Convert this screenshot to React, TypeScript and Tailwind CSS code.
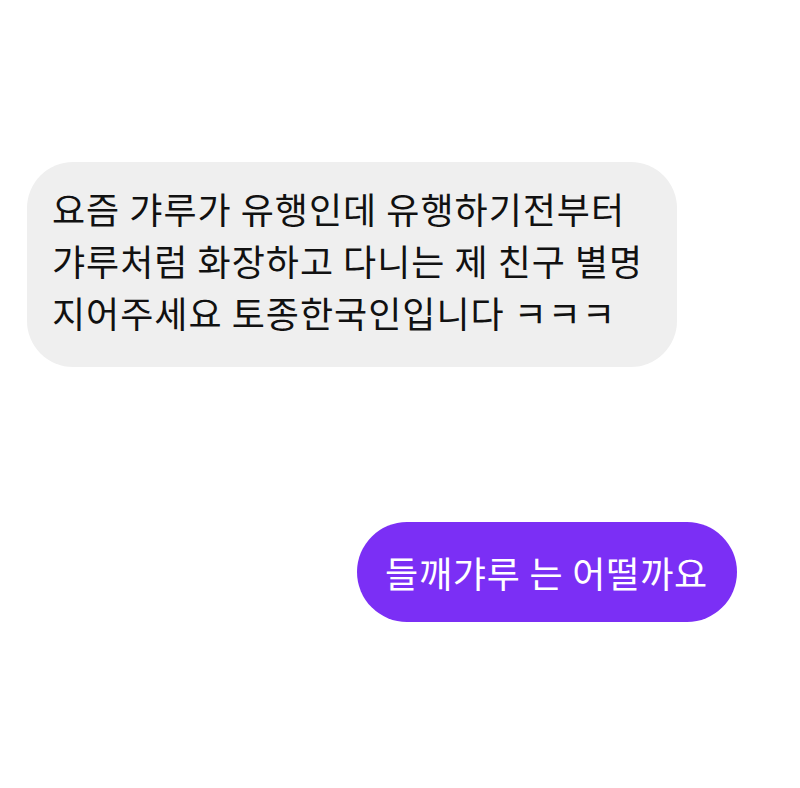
import React from "react";

export default function App() {
  const font = { fontFamily: '"Noto Sans CJK KR", "Noto Sans", sans-serif' };
  return (
    <div className="w-[800px] h-[788px] bg-white relative overflow-hidden" style={font}>
      <div className="pt-[162px] pl-[27px]">
        <div className="w-[650px] h-[205px] rounded-[46px] bg-[#efefef] pl-[25px] pt-[20px] text-[36px] leading-[52px] text-[#111] tracking-[1px]">
          <div>요즘 갸루가 유행인데 유행하기전부터</div>
          <div>갸루처럼 화장하고 다니는 제 친구 별명</div>
          <div>지어주세요 토종한국인입니다 ㅋㅋㅋ</div>
        </div>
      </div>
      <div className="pt-[155px] pl-[357px]">
        <div className="w-[380px] h-[100px] rounded-[50px] bg-[#7b2ff5] pl-[28px] flex items-center text-[36px] text-white tracking-[0.8px]">
          들깨갸루 는 어떨까요
        </div>
      </div>
    </div>
  );
}
